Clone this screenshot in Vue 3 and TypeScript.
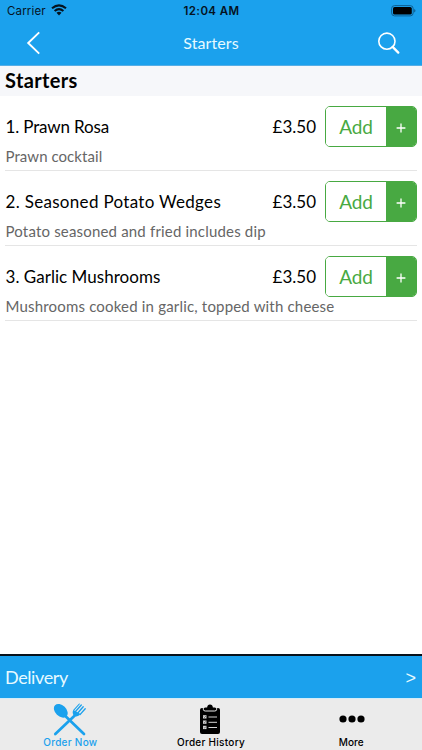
<script setup lang="ts">
interface MenuItem {
  name: string
  description: string
  price: string
  key: string
}

const items: MenuItem[] = [
  { key: 'prawn', name: '1. Prawn Rosa', description: 'Prawn cocktail', price: '£3.50' },
  { key: 'wedges', name: '2. Seasoned Potato Wedges', description: 'Potato seasoned and fried includes dip', price: '£3.50' },
  { key: 'garlic', name: '3. Garlic Mushrooms', description: 'Mushrooms cooked in garlic, topped with cheese', price: '£3.50' },
]
</script>

<template>
  <div class="screen">
    <header class="top">
      <div class="status">
        <div class="carrier">
          <span>Carrier</span>
          <svg width="16" height="12" viewBox="0 0 16 12">
            <g fill="none" stroke="#05131f" stroke-width="2.1">
              <path d="M1 4.3Q8 -1.7 15 4.3" />
              <path d="M3.6 7Q8 3.3 12.4 7" />
            </g>
            <path d="M5.5 8.8Q8 6.9 10.5 8.8L8 11.4Z" fill="#05131f" />
          </svg>
        </div>
        <span class="clock">12:04 AM</span>
        <svg class="battery" width="25" height="12" viewBox="0 0 25 12">
          <rect x="0.6" y="0.6" width="21.6" height="10.3" rx="3" fill="none" stroke="#0d5f92" stroke-width="1" />
          <rect x="2" y="2" width="18.8" height="7.5" rx="1.6" fill="#000" />
          <path d="M23.3 4v3.6q1.1-.5 1.1-1.8T23.3 4Z" fill="#0d4f7c" />
        </svg>
      </div>
      <nav class="nav">
        <svg class="back" width="16" height="26" viewBox="0 0 16 26">
          <path d="M14.2 2.4L3.2 13L14.2 23.6" fill="none" stroke="#fff" stroke-width="1.9" />
        </svg>
        <span class="title">Starters</span>
        <svg class="search" width="24" height="24" viewBox="0 0 24 24">
          <circle cx="10.9" cy="9.2" r="8.1" fill="none" stroke="#fff" stroke-width="1.6" />
          <path d="M16.6 14.9L22.3 20.6" stroke="#fff" stroke-width="2.3" stroke-linecap="round" />
        </svg>
      </nav>
    </header>

    <h1 class="section"><span>Starters</span></h1>
    <main class="list">
      <article v-for="item in items" :key="item.key" class="item" :class="item.key">
        <div class="row">
          <span class="name">{{ item.name }}</span>
          <span class="price">{{ item.price }}</span>
          <div class="stepper">
            <button class="add">Add</button>
            <button class="plus">
              <svg width="10" height="10" viewBox="0 0 10 10"><path d="M5 .6V9.4M.6 5H9.4" stroke="#fff" stroke-width="1.3" /></svg>
            </button>
          </div>
        </div>
        <p class="description">{{ item.description }}</p>
      </article>
    </main>

    <div class="delivery">
      <span class="mode">Delivery</span>
      <span class="arrow">&gt;</span>
    </div>
    <footer class="tabs">
      <div class="tab active">
        <svg width="34" height="33" viewBox="0 0 34 33">
          <g stroke="#1ba1ed" stroke-linecap="round" fill="none">
            <path d="M10.5 11.3L31 31" stroke-width="2.7" />
            <path d="M22.3 12L2.3 31" stroke-width="2.7" />
            <path d="M22.5 8.5L28.3 2M24.8 10L30.2 3.7M27 11.6L32.2 5.8" stroke-width="1.35" />
            <path d="M20.8 7.2L26.3 1" stroke-width="1.1" />
          </g>
          <ellipse cx="7.8" cy="7.8" rx="8" ry="5.5" transform="rotate(44 7.8 7.8)" fill="#1ba1ed" />
          <path d="M20.3 7Q18.8 10.3 21 12.6Q24.3 14.8 27.6 11Z" fill="#1ba1ed" />
        </svg>
        <span class="now">Order Now</span>
      </div>
      <div class="tab">
        <svg class="clipboard" width="20" height="30" viewBox="0 0 20 30">
          <rect y="4" width="20" height="26" rx="2" fill="#000" />
          <path d="M3.3 3.5V5.2Q3.3 7 5.2 7H14.8Q16.7 7 16.7 5.2V3.5" fill="none" stroke="#ebebeb" stroke-width="1" />
          <path d="M4.1 6V4.7Q4.1 3.4 5.4 3.4H7.1Q7.4.4 10 .4T12.9 3.4H14.6Q15.9 3.4 15.9 4.7V6Z" fill="#000" />
          <g fill="#d5d5d5">
            <rect x="3" y="11.2" width="3.5" height="3.3" /><rect x="3" y="16.5" width="3.5" height="3.3" /><rect x="3" y="21.8" width="3.5" height="3.3" />
          </g>
          <path d="M8.5 13H17M8.5 18.3H17M8.5 23.5H17" stroke="#d5d5d5" />
          <path d="M3.7 12.7l.8.8 1.5-1.6M3.7 18l.8.8 1.5-1.6M3.7 23.3l.8.8 1.5-1.6" fill="none" stroke="#333" stroke-width=".6" />
        </svg>
        <span class="history">Order History</span>
      </div>
      <div class="tab">
        <svg class="dots" width="26" height="8" viewBox="0 0 26 8"><circle cx="4" cy="4" r="3.6" /><circle cx="13" cy="4" r="3.6" /><circle cx="22" cy="4" r="3.6" /></svg>
        <span class="more">More</span>
      </div>
    </footer>
  </div>
</template>

<style>
body { margin: 0; background: #fff; }
</style>

<style scoped>
* { box-sizing: border-box; }
.screen { width: 422px; height: 750px; display: flex; flex-direction: column; overflow: hidden; background: #fff; color: #000; font-family: Lato, "Open Sans", sans-serif; }
.top { height: 66px; flex: none; background: #1ba1ed; border-bottom: 1px solid #56aee6; }
.status { height: 22px; padding: 0 6px 0 7px; display: grid; grid-template-columns: 1fr auto 1fr; align-items: center; font-family: Inter, sans-serif; font-size: 11.5px; line-height: 22px; color: #05131f; }
.carrier { display: flex; align-items: center; gap: 5px; letter-spacing: .15px; }
.carrier svg { margin-top: -2px; }
.clock { font-weight: 600; letter-spacing: .4px; }
.battery { justify-self: end; margin-top: -1px; }
.nav { height: 43px; padding: 0 22px 0 25px; display: grid; grid-template-columns: 1fr auto 1fr; align-items: center; }
.back { margin-top: -1px; }
.title { color: #e7faff; font-size: 16px; line-height: 20px; margin: -2px 3px 0 0; letter-spacing: .1px; }
.search { justify-self: end; }
.section { flex: none; height: 30px; margin: 0; padding-left: 5px; background: #f6f7fa; font-size: 20px; line-height: 28px; font-weight: 700; letter-spacing: .35px; }
.list { flex: 1; padding: 0 5px; }
.item { height: 75px; border-bottom: 1px solid #e5e5e5; }
.row { height: 51px; padding-top: 10px; display: flex; align-items: center; }
.name, .price { font-size: 17px; line-height: 24px; }
.name { flex: 1; padding-left: .5px; }
.prawn .name { letter-spacing: -.15px; }
.wedges .name { letter-spacing: .31px; }
.garlic .name { letter-spacing: .03px; }
.stepper { margin-left: 9px; width: 92px; height: 41px; display: flex; border: 1px solid #48a942; border-radius: 5px; overflow: hidden; }
.stepper button { padding: 0; border: 0; font: inherit; }
.add { flex: 1; background: #fff; color: #48a942; }
.stepper .add { font-size: 19px; letter-spacing: -.2px; }
.plus { width: 30px; background: #48a942; display: flex; align-items: center; justify-content: center; padding-top: 3px; }
.plus svg { margin-top: 3px; }
.description { margin: 0; padding-left: .5px; font-size: 15px; line-height: 18px; color: #666; white-space: nowrap; letter-spacing: .18px; }
.prawn .description { letter-spacing: .06px; }
.delivery { flex: none; height: 45px; border-top: 2px solid #07111a; border-bottom: 1px solid #d3edf9; background: #1ba1ed; color: #e7faff; display: flex; align-items: center; justify-content: space-between; padding: 0 6px 0 5px; font-size: 18px; }
.mode { letter-spacing: -.4px; }
.arrow { font-family: "Liberation Sans", sans-serif; font-size: 18px; margin-top: 2px; }
.tabs { height: 51px; flex: none; background: #ebebeb; display: grid; grid-template-columns: repeat(3, 1fr); font-family: Inter, sans-serif; font-size: 10px; font-weight: 500; }
.tab { display: grid; grid-template-rows: 37px 12px; justify-items: center; align-items: center; line-height: 12px; letter-spacing: .27px; }
.tab svg { margin-top: 4px; }
.tab .clipboard { margin-top: 2px; margin-right: 2px; }
.tab .dots { margin-top: 3px; }
.more { letter-spacing: 0; margin-right: 1px; }
.active { color: #1ba1ed; }
</style>
